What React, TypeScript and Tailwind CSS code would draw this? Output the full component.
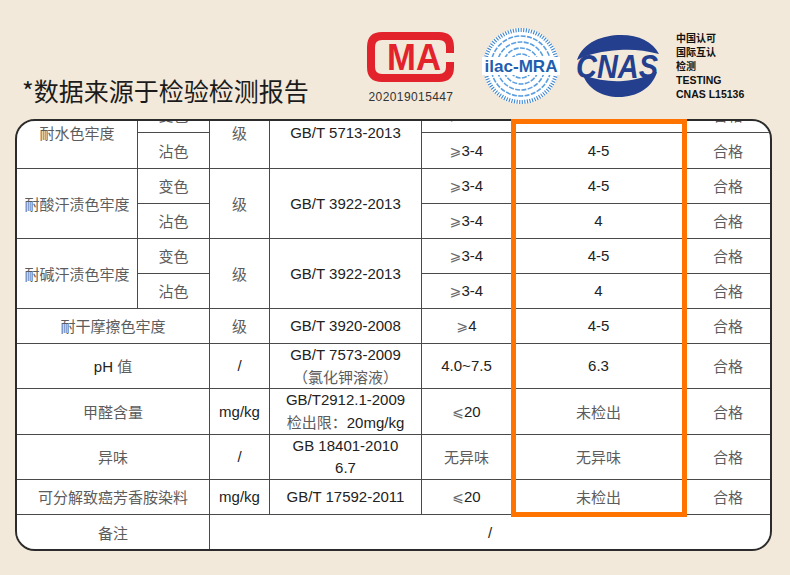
import React from "react";

const CN = ({ children }: { children: React.ReactNode }) => (
  <span className="font-['Noto_Sans_CJK_SC',sans-serif] text-[#5c5c5c]">{children}</span>
);

const Sym = ({ children }: { children: React.ReactNode }) => (
  <span className="font-['DejaVu_Sans',sans-serif] text-[#6a6a6a] text-[14px]">{children}</span>
);

const Cell = ({
  children,
  className = "",
}: {
  children?: React.ReactNode;
  className?: string;
}) => (
  <div
    className={
      "flex flex-col items-center justify-center bg-white text-center text-[15px] leading-[22px] text-[#222] " +
      className
    }
  >
    {children}
  </div>
);

const Ge = ({ v }: { v: string }) => (
  <span>
    <Sym>⩾</Sym>
    {v}
  </span>
);
const Le = ({ v }: { v: string }) => (
  <span>
    <Sym>⩽</Sym>
    {v}
  </span>
);

const Pass = () => (
  <Cell>
    <CN>合格</CN>
  </Cell>
);

function CmaLogo() {
  return (
    <svg width="90" height="52" viewBox="0 0 90 52">
      <path
        d="M84 22 V16 Q84 5 73 5 H16 Q5 5 5 16 V36 Q5 47 16 47 H73 Q84 47 84 36 V31"
        fill="none"
        stroke="#e3232b"
        strokeWidth="8"
      />
      <text
        x="48"
        y="39"
        textAnchor="middle"
        fontFamily="Liberation Sans, Arial, sans-serif"
        fontWeight="bold"
        fontSize="36"
        fill="#e3232b"
        textLength="54"
        lengthAdjust="spacingAndGlyphs"
      >
        MA
      </text>
    </svg>
  );
}

function IlacLogo() {
  return (
    <svg width="80" height="80" viewBox="0 0 80 80">
      <circle cx="40" cy="40" r="38" fill="#ffffff" />
      <circle
        cx="40"
        cy="40"
        r="36"
        fill="none"
        stroke="#3f87d0"
        strokeWidth="4"
        strokeDasharray="1.1 1.5"
      />
      {[12, 18, 24, 30].map((r) => (
        <circle
          key={r}
          cx="40"
          cy="40"
          r={r}
          fill="none"
          stroke="#5b9fe0"
          strokeWidth="1.6"
          strokeDasharray="5 1.4"
        />
      ))}
      <rect x="1" y="31" width="78" height="18" fill="#ffffff" />
      <text
        x="40"
        y="46"
        textAnchor="middle"
        fontFamily="Liberation Sans, Arial, sans-serif"
        fontWeight="bold"
        fontSize="17"
        fill="#1f5faf"
        textLength="73"
        lengthAdjust="spacingAndGlyphs"
      >
        ilac-MRA
      </text>
    </svg>
  );
}

function CnasLogo() {
  return (
    <svg width="90" height="66" viewBox="0 0 90 66">
      <path
        d="M4 27 C10 9 30 2 48 2 C66 2 80 9 86 21 C72 17 58 16 46 17 C30 18 15 21 4 27 Z"
        fill="#233f8e"
      />
      <path
        d="M10 42 C24 47 38 49 50 48 C64 47 74 43 84 39 C79 55 64 64 46 64 C29 64 15 56 10 42 Z"
        fill="#233f8e"
      />
      <text
        x="44"
        y="45"
        textAnchor="middle"
        fontFamily="Liberation Sans, Arial, sans-serif"
        fontWeight="bold"
        fontStyle="italic"
        fontSize="33"
        fill="#233f8e"
        textLength="82"
        lengthAdjust="spacingAndGlyphs"
      >
        CNAS
      </text>
    </svg>
  );
}

export default function App() {
  return (
    <div className="relative w-[790px] h-[575px] overflow-hidden bg-[#f2e9da] font-['Liberation_Sans','Noto_Sans_CJK_SC',sans-serif]">
      {/* header */}
      <div className="flex h-[119px]">
        <div className="w-[364px] pl-[22px] pt-[74px] text-[25px] leading-[32px] text-[#1b1b1b] font-['Noto_Sans_CJK_SC',sans-serif]">
          *数据来源于检验检测报告
        </div>
        <div className="flex w-[94px] flex-col items-center pt-[31px]">
          <CmaLogo />
          <div className="mt-[7px] text-[12px] leading-[14px] tracking-[0.4px] text-[#333]">
            202019015447
          </div>
        </div>
        <div className="ml-[23px] pt-[26px]">
          <IlacLogo />
        </div>
        <div className="ml-[12px] pt-[33px]">
          <CnasLogo />
        </div>
        <div className="ml-[13px] pt-[31px] text-[10.5px] leading-[14px] font-bold text-[#111]">
          <div className="font-['Noto_Sans_CJK_SC',sans-serif] text-[10px]">中国认可</div>
          <div className="font-['Noto_Sans_CJK_SC',sans-serif] text-[10px]">国际互认</div>
          <div className="font-['Noto_Sans_CJK_SC',sans-serif] text-[10px]">检测</div>
          <div>TESTING</div>
          <div>CNAS L15136</div>
        </div>
      </div>

      {/* table card */}
      <div className="ml-[15px] h-[432px] w-[757px] overflow-hidden rounded-[20px] border-2 border-[#2b2b2b] bg-white">
        <div className="-mt-[23px] grid grid-cols-[120px_71px_59px_151px_89px_173px_1fr] grid-rows-[34px_35px_34px_34px_34px_34px_34px_44px_45px_44px_34px_36px] gap-px bg-[#4a4a4a]">
          {/* 耐水色牢度 */}
          <Cell className="row-span-2">
            <CN>耐水色牢度</CN>
          </Cell>
          <Cell>
            <CN>变色</CN>
          </Cell>
          <Cell className="row-span-2">
            <CN>级</CN>
          </Cell>
          <Cell className="row-span-2">GB/T 5713-2013</Cell>
          <Cell>
            <Ge v="3-4" />
          </Cell>
          <Cell>4-5</Cell>
          <Pass />
          <Cell>
            <CN>沾色</CN>
          </Cell>
          <Cell>
            <Ge v="3-4" />
          </Cell>
          <Cell>4-5</Cell>
          <Pass />

          {/* 耐酸汗渍色牢度 */}
          <Cell className="row-span-2">
            <CN>耐酸汗渍色牢度</CN>
          </Cell>
          <Cell>
            <CN>变色</CN>
          </Cell>
          <Cell className="row-span-2">
            <CN>级</CN>
          </Cell>
          <Cell className="row-span-2">GB/T 3922-2013</Cell>
          <Cell>
            <Ge v="3-4" />
          </Cell>
          <Cell>4-5</Cell>
          <Pass />
          <Cell>
            <CN>沾色</CN>
          </Cell>
          <Cell>
            <Ge v="3-4" />
          </Cell>
          <Cell>4</Cell>
          <Pass />

          {/* 耐碱汗渍色牢度 */}
          <Cell className="row-span-2">
            <CN>耐碱汗渍色牢度</CN>
          </Cell>
          <Cell>
            <CN>变色</CN>
          </Cell>
          <Cell className="row-span-2">
            <CN>级</CN>
          </Cell>
          <Cell className="row-span-2">GB/T 3922-2013</Cell>
          <Cell>
            <Ge v="3-4" />
          </Cell>
          <Cell>4-5</Cell>
          <Pass />
          <Cell>
            <CN>沾色</CN>
          </Cell>
          <Cell>
            <Ge v="3-4" />
          </Cell>
          <Cell>4</Cell>
          <Pass />

          {/* 耐干摩擦色牢度 */}
          <Cell className="col-span-2">
            <CN>耐干摩擦色牢度</CN>
          </Cell>
          <Cell>
            <CN>级</CN>
          </Cell>
          <Cell>GB/T 3920-2008</Cell>
          <Cell>
            <Ge v="4" />
          </Cell>
          <Cell>4-5</Cell>
          <Pass />

          {/* pH */}
          <Cell className="col-span-2">
            <span>
              pH <CN>值</CN>
            </span>
          </Cell>
          <Cell>/</Cell>
          <Cell>
            <div>GB/T 7573-2009</div>
            <div>
              <CN>（氯化钾溶液）</CN>
            </div>
          </Cell>
          <Cell>4.0~7.5</Cell>
          <Cell>6.3</Cell>
          <Pass />

          {/* 甲醛含量 */}
          <Cell className="col-span-2">
            <CN>甲醛含量</CN>
          </Cell>
          <Cell>mg/kg</Cell>
          <Cell>
            <div>GB/T2912.1-2009</div>
            <div>
              <CN>检出限：</CN>20mg/kg
            </div>
          </Cell>
          <Cell>
            <Le v="20" />
          </Cell>
          <Cell>
            <CN>未检出</CN>
          </Cell>
          <Pass />

          {/* 异味 */}
          <Cell className="col-span-2">
            <CN>异味</CN>
          </Cell>
          <Cell>/</Cell>
          <Cell>
            <div>GB 18401-2010</div>
            <div>6.7</div>
          </Cell>
          <Cell>
            <CN>无异味</CN>
          </Cell>
          <Cell>
            <CN>无异味</CN>
          </Cell>
          <Pass />

          {/* 可分解致癌芳香胺染料 */}
          <Cell className="col-span-2">
            <CN>可分解致癌芳香胺染料</CN>
          </Cell>
          <Cell>mg/kg</Cell>
          <Cell>GB/T 17592-2011</Cell>
          <Cell>
            <Le v="20" />
          </Cell>
          <Cell>
            <CN>未检出</CN>
          </Cell>
          <Pass />

          {/* 备注 */}
          <Cell className="col-span-2">
            <CN>备注</CN>
          </Cell>
          <Cell className="col-span-5">/</Cell>
        </div>
      </div>

      {/* highlight overlay */}
      <div className="pointer-events-none absolute left-[511px] top-[119px] h-[398px] w-[176px] border-[5px] border-[#ff7300]" />
    </div>
  );
}
